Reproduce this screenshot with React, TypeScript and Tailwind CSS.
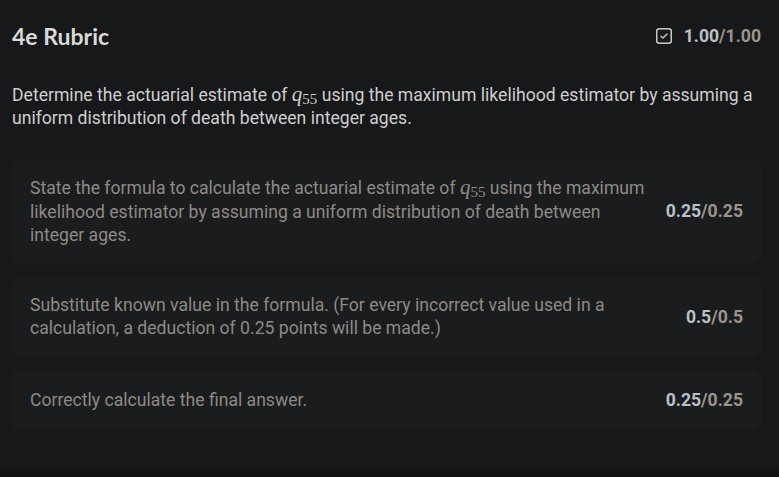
import React from 'react';

const ROBOTO = { fontFamily: 'Roboto, "Noto Sans", sans-serif' };

// Inline math for q_55, styled like a KaTeX render
function Q55() {
  return (
    <span className="whitespace-nowrap" style={{ fontFamily: '"Liberation Serif", "DejaVu Serif", serif' }}>
      <span className="italic text-[21px]">q</span>
      <span className="text-[15px] relative top-[3px]">55</span>
    </span>
  );
}

function Score({ got, total }: { got: string; total: string }) {
  return (
    <span className="shrink-0 font-bold text-[17.6px] whitespace-nowrap" style={ROBOTO}>
      <span className="text-[#b9c1ca]">{got}</span>
      <span className="text-[#9b958d]">/{total}</span>
    </span>
  );
}

interface RubricItem {
  text: React.ReactNode;
  got: string;
  total: string;
}

const items: RubricItem[] = [
  {
    text: (
      <>
        State the formula to calculate the actuarial estimate of <Q55 /> using the maximum likelihood
        estimator by assuming a uniform distribution of death between integer ages.
      </>
    ),
    got: '0.25',
    total: '0.25',
  },
  {
    text: 'Substitute known value in the formula. (For every incorrect value used in a calculation, a deduction of 0.25 points will be made.)',
    got: '0.5',
    total: '0.5',
  },
  {
    text: 'Correctly calculate the final answer.',
    got: '0.25',
    total: '0.25',
  },
];

function RubricCard({ item }: { item: RubricItem }) {
  return (
    <div className="flex items-center justify-between gap-1 rounded-lg bg-[#1b1c1e] px-[18px] py-[17px]">
      <p className="max-w-[628px] text-[17.6px] leading-[23px] text-[#8e8a85]" style={ROBOTO}>
        {item.text}
      </p>
      <Score got={item.got} total={item.total} />
    </div>
  );
}

export default function App() {
  return (
    <div className="flex h-[477px] w-full flex-col bg-[#17181a]">
      <div className="flex flex-1 flex-col pl-3 pr-[18px] pt-6">
        {/* Header */}
        <div className="flex h-6 items-center justify-between">
          <h1
            className="text-[23px] font-bold leading-6 text-[#d9d9d9]"
            style={{ fontFamily: 'Lato, "Open Sans", sans-serif' }}
          >
            4e Rubric
          </h1>
          <div className="flex items-center gap-3">
            <svg width="16" height="16" viewBox="0 0 16 16" fill="none">
              <rect x="0.75" y="0.75" width="14.5" height="14.5" rx="2.5" stroke="#c9c9c9" strokeWidth="1.5" />
              <path d="M5 8.2l2 1.9 4-4" stroke="#c9c9c9" strokeWidth="1.4" strokeLinecap="round" strokeLinejoin="round" />
            </svg>
            <Score got="1.00" total="1.00" />
          </div>
        </div>

        {/* Question */}
        <p className="mt-[35px] text-[17.6px] leading-[22px] text-[#cfcfcf]" style={ROBOTO}>
          Determine the actuarial estimate of <Q55 /> using the maximum likelihood estimator by assuming a
          uniform distribution of death between integer ages.
        </p>

        {/* Rubric items */}
        <div className="mt-[30px] flex flex-col gap-[13px]">
          {items.map((item, i) => (
            <RubricCard key={i} item={item} />
          ))}
        </div>
      </div>
      <div className="h-[7px] bg-[#121314]" />
    </div>
  );
}
